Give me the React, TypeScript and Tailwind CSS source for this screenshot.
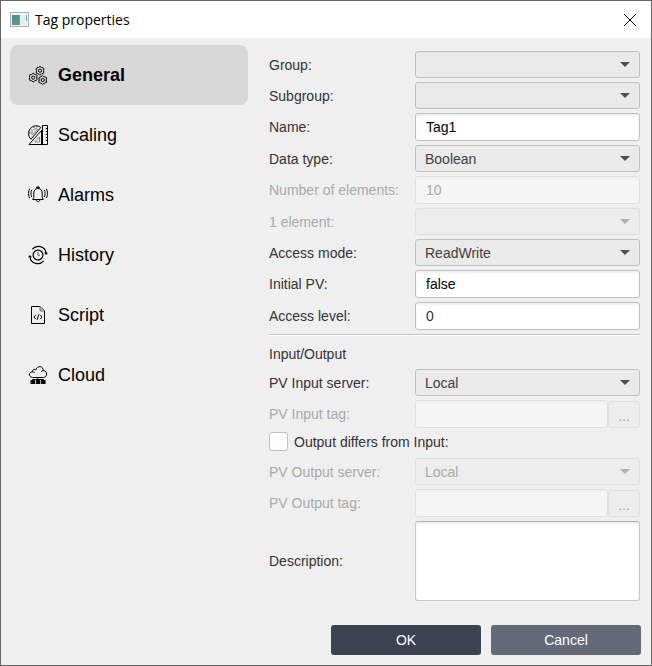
import React, { useState } from "react";
import clsx from "clsx";

const iconProps = {
  width: 20,
  height: 20,
  viewBox: "0 0 20 20",
  fill: "none",
  stroke: "currentColor",
  strokeWidth: 1,
  "aria-hidden": true,
};

const Nut: React.FC<{ x: number; y: number }> = ({ x, y }) => (
  <g transform={`translate(${x} ${y})`}>
    <path d="M0 -4.4 L1.5 -3.3 L3.9 -2.3 L3.5 0 L3.9 2.3 L1.5 3.3 L0 4.4 L-1.5 3.3 L-3.9 2.3 L-3.5 0 L-3.9 -2.3 L-1.5 -3.3 Z" />
    <circle r="1.6" />
  </g>
);

const GeneralIcon = () => (
  <svg {...iconProps}>
    <Nut x={12} y={5.7} />
    <Nut x={5.2} y={12.6} />
    <Nut x={14.7} y={15} />
  </svg>
);

const ScalingIcon = () => (
  <svg {...iconProps}>
    {/* Protractor */}
    <path d="M12.8 2.5 C8.5 -1.2 .8 1.2 .6 8.2 C.5 10.8 1.6 12.9 3 14.2 Z" />
    <path d="M1 8h1.6M2.4 4l1.3 1M5.3 1.6l.9 1.4M8.8 .8v1.6" stroke="#444" />
    <path d="M9.6 4.2 C6.5 2.8 3.6 5.2 3.8 8.2 L4.4 9.8 Z" stroke="#777" />
    {/* Set square */}
    <path d="M1 19.5 L13.5 5.5 V19.5 Z" />
    <path d="M6.8 17 L11.5 11.8 V17 Z" stroke="#888" />
    {/* Ruler */}
    <path d="M14.5 .5 H19.5 V19.5 H14.5 Z" />
    <path d="M17.8 3.5h1.7M17.8 6.5h1.7M17.8 9.5h1.7M17.8 12.5h1.7M17.8 15.5h1.7" />
    <path d="M14 6 V20" strokeWidth="2" />
  </svg>
);

const AlarmsIcon = () => (
  <svg {...iconProps}>
    <path d="M4.5 14.5 H15.5" />
    <path d="M4.8 14.3 L5.8 12.3 V8 C5.8 5 7.5 3.5 10 3.5 C12.5 3.5 14.2 5 14.2 8 V12.3 L15.2 14.3" />
    <path d="M8.8 3.2 C8.8 1.6 11.2 1.6 11.2 3.2" strokeWidth="1.5" />
    <path d="M8.2 15 C8.4 17.2 11.6 17.2 11.8 15" />
    <path d="M3.8 4.8 C2.6 7 2.6 9.8 3.8 12 M1.6 3.8 C.1 6.8 .1 10 1.6 13" />
    <path d="M16.2 4.8 C17.4 7 17.4 9.8 16.2 12 M18.4 3.8 C19.9 6.8 19.9 10 18.4 13" />
  </svg>
);

const HistoryIcon = () => (
  <svg {...iconProps}>
    <circle cx="10" cy="10" r="4.9" strokeWidth="1.2" />
    <path d="M10 7 V10.3 H12" stroke="#666" />
    <path d="M4.3 4.2 C8.5 -.6 17.2 1 18 8 M15.7 15.8 C11.5 20.6 2.8 19 2 12" strokeWidth="1.2" />
    <path d="M16 7.8 L20 7.8 L18.1 10 Z M4 12.2 L0 12.2 L1.9 10 Z" fill="currentColor" stroke="none" />
  </svg>
);

const ScriptIcon = () => (
  <svg {...iconProps}>
    <path d="M3.5 1.5 H12 L16.5 6 V18.5 H3.5 Z" />
    <path d="M12 1.5 V6 H16.5 Z" fill="#bbb" stroke="#777" />
    <path d="M7.8 9.8 L6 12 L7.8 14.2 M12.2 9.8 L14 12 L12.2 14.2 M10.8 9.3 L9.2 14.7" />
  </svg>
);

const CloudIcon = () => (
  <svg {...iconProps}>
    <path d="M4.5 12.5 C.2 12 .5 7 4.2 7 C4.2 4.5 6.6 3.9 8 4.8 C9 .2 15.5 .8 15.2 5.6 C20 5.8 19.5 12.2 15.5 12.5 Z" />
    <path d="M4.5 7 C5.5 6.8 6.3 7.2 6.7 8 M15.2 5.5 C14.5 5.8 13.5 6 13.2 7" />
    <path d="M10 12.5 V15 M4.5 15.5 V14.5 H15.5 V15.5" />
    <path d="M2.5 15h4.5v4h-4.5zM7.8 15h4.5v4h-4.5zM13.1 15h4.5v4h-4.5z" fill="currentColor" stroke="none" />
  </svg>
);

const NAV_ITEMS = [
  { label: "General", icon: <GeneralIcon /> },
  { label: "Scaling", icon: <ScalingIcon /> },
  { label: "Alarms", icon: <AlarmsIcon /> },
  { label: "History", icon: <HistoryIcon /> },
  { label: "Script", icon: <ScriptIcon /> },
  { label: "Cloud", icon: <CloudIcon /> },
];

interface RowProps {
  id: string;
  label: string;
  disabled?: boolean;
  children: React.ReactNode;
}

const Row: React.FC<RowProps> = ({ id, label, disabled, children }) => (
  <div className="flex items-center">
    <label htmlFor={id} className={clsx("w-[146px] shrink-0", disabled ? "text-[#a9a9a9]" : "text-[#333]")}>
      {label}
    </label>
    <div className="flex min-w-0 flex-1 items-end">{children}</div>
  </div>
);

interface FieldProps {
  id: string;
  label: string;
  value?: string;
  disabled?: boolean;
}

const inputClass =
  "h-7 w-full min-w-0 rounded-[3px] border border-[#c0c0c0] bg-white px-2.5 shadow-[inset_0_2px_2px_#f0f0f0] outline-none disabled:border-[#dedede] disabled:bg-[#f5f5f5] disabled:text-[#a9a9a9]";

const SelectRow: React.FC<FieldProps> = ({ id, label, value = "", disabled }) => (
  <Row id={id} label={label} disabled={disabled}>
    <div className="relative w-full">
      <select
        id={id}
        disabled={disabled}
        defaultValue={value}
        className="block h-[27px] w-full appearance-none rounded-[3px] border border-[#c0c0c0] bg-[#eaeaea] pr-8 pl-[9px] text-[#404040] outline-none disabled:border-[#dedede] disabled:bg-[#ededed] disabled:text-[#a9a9a9] disabled:opacity-100"
      >
        <option value={value}>{value}</option>
      </select>
      <svg
        viewBox="0 0 10 5"
        className={clsx(
          "pointer-events-none absolute top-[11px] right-2.5 h-[5px] w-2.5",
          disabled ? "fill-[#b0b0b0]" : "fill-[#505050]"
        )}
        aria-hidden
      >
        <path d="M0 0 H10 L5 5 Z" />
      </svg>
    </div>
  </Row>
);

const InputRow: React.FC<FieldProps & { muted?: boolean }> = ({ id, label, value = "", disabled, muted }) => (
  <Row id={id} label={label} disabled={disabled}>
    <input
      id={id}
      type="text"
      defaultValue={value}
      disabled={disabled}
      className={clsx(inputClass, muted ? "text-[#333]" : "text-black")}
    />
  </Row>
);

const TagRow: React.FC<FieldProps> = ({ id, label, disabled }) => (
  <Row id={id} label={label} disabled={disabled}>
    <input id={id} type="text" disabled={disabled} className={inputClass} />
    <button
      type="button"
      disabled={disabled}
      className="h-[27px] w-8 shrink-0 rounded-[3px] border border-[#c0c0c0] bg-[#eaeaea] pt-0.5 leading-5 disabled:border-[#dedede] disabled:bg-[#ededed] disabled:text-[#a9a9a9]"
    >
      ...
    </button>
  </Row>
);

export default function App() {
  const [active, setActive] = useState("General");
  const [differs, setDiffers] = useState(false);

  return (
    <div className="flex min-h-screen flex-col border border-[#666] bg-[#efefef] font-['Liberation_Sans',Arial,sans-serif] text-sm leading-5 text-[#333]">
      {/* Title bar */}
      <header className="flex h-[37px] items-center bg-white pr-[13px] pl-[9px] text-black">
        <svg width="19" height="15" viewBox="0 0 19 15" aria-hidden>
          <defs>
            <linearGradient id="app-pane" x1="0" y1="0" x2="1" y2="1">
              <stop offset="0" stopColor="#4c83a6" />
              <stop offset="1" stopColor="#5aa874" />
            </linearGradient>
          </defs>
          <rect x=".5" y=".5" width="18" height="14" fill="#f4f6f7" stroke="#a9b0b8" />
          <rect x="2" y="3" width="8" height="10" fill="url(#app-pane)" />
          <rect x="11" y="3" width="4" height="10" fill="#e6ebee" />
          <rect x="16" y="3" width="1" height="6" fill="#5d9f93" />
        </svg>
        <h1 className="ml-1.5 font-['Open_Sans','Noto_Sans',sans-serif] text-sm">Tag properties</h1>
        <button type="button" aria-label="Close" className="ml-auto">
          <svg width="16" height="16" viewBox="0 0 16 16" fill="none" stroke="currentColor" strokeWidth="1">
            <path d="M2 2 L14 14 M14 2 L2 14" />
          </svg>
        </button>
      </header>

      <div className="flex">
        {/* Sections */}
        <nav className="ml-[9px] w-[238px] shrink-0 pt-[7px]">
          {NAV_ITEMS.map((item) => (
            <button
              key={item.label}
              type="button"
              onClick={() => setActive(item.label)}
              className={clsx(
                "flex h-15 w-full items-center gap-2.5 rounded-lg pl-[18px] text-left text-lg text-black",
                active === item.label && "bg-[#d7d7d7] font-bold"
              )}
            >
              {item.icon}
              {item.label}
            </button>
          ))}
        </nav>

        {/* Properties of the tag */}
        <form className="flex min-w-0 flex-1 flex-col gap-1 pt-[13px] pr-[11px] pl-[21px]">
          <SelectRow id="group" label="Group:" />
          <SelectRow id="subgroup" label="Subgroup:" />
          <InputRow id="name" label="Name:" value="Tag1" />
          <SelectRow id="data-type" label="Data type:" value="Boolean" />
          <InputRow id="elements" label="Number of elements:" value="10" disabled />
          <SelectRow id="element" label="1 element:" disabled />
          <SelectRow id="access-mode" label="Access mode:" value="ReadWrite" />
          <InputRow id="initial-pv" label="Initial PV:" value="false" />
          <InputRow id="access-level" label="Access level:" value="0" muted />

          <hr className="h-0.5 border-t border-b border-t-[#c4c4c4] border-b-white" />
          <h2 className="pt-[3px] leading-[22px]">Input/Output</h2>

          <SelectRow id="input-server" label="PV Input server:" value="Local" />
          <TagRow id="input-tag" label="PV Input tag:" disabled />
          <div className="flex h-[22px] items-start gap-1.5">
            <input
              id="differs"
              type="checkbox"
              checked={differs}
              onChange={(e) => setDiffers(e.target.checked)}
              className="size-[19px] appearance-none rounded-[3px] border border-[#c0c0c0] bg-[#fdfdfd] checked:bg-[#3d4250]"
            />
            <label htmlFor="differs">Output differs from Input:</label>
          </div>
          <SelectRow id="output-server" label="PV Output server:" value="Local" disabled={!differs} />
          <TagRow id="output-tag" label="PV Output tag:" disabled={!differs} />
          <Row id="description" label="Description:">
            <textarea
              id="description"
              className="block h-20 w-full resize-none rounded-[3px] border border-[#c8c8c8] border-t-[#b0b0b0] bg-white px-2.5 py-1 text-black shadow-[inset_0_2px_2px_#f0f0f0] outline-none"
            />
          </Row>
        </form>
      </div>

      <footer className="flex justify-end gap-2.5 px-2.5 pt-6 pb-2.5 text-white">
        <button type="button" className="h-[30px] w-[150px] rounded-[3px] bg-[#3d4250]">
          OK
        </button>
        <button type="button" className="h-[30px] w-[150px] rounded-[3px] bg-[#656a78]">
          Cancel
        </button>
      </footer>
    </div>
  );
}
